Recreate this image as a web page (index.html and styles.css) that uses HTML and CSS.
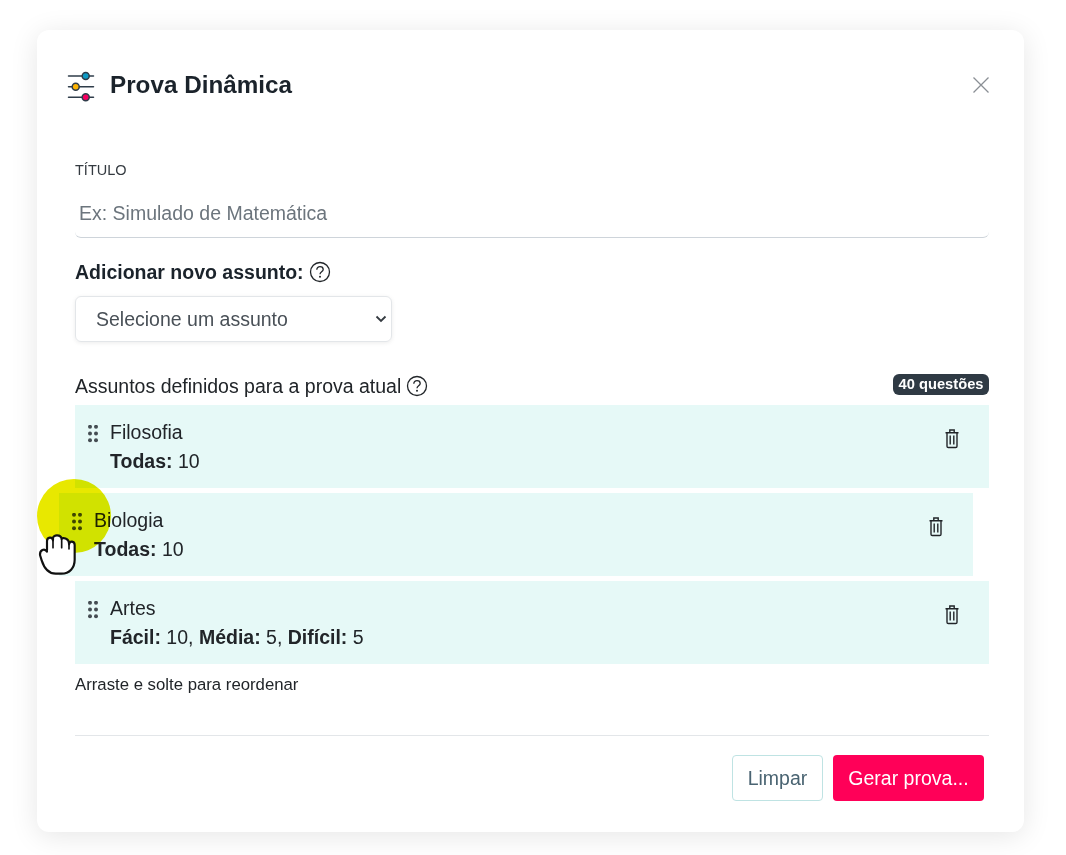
FILE: index.html
```html
<!DOCTYPE html>
<html lang="pt-BR">
<head>
<meta charset="utf-8">
<title>Prova Dinâmica</title>
<link rel="stylesheet" href="styles.css">
</head>
<body>
<main class="modal">
  <header class="modal-header">
    <div class="title-wrap">
      <svg class="title-icon" width="28" height="28" viewBox="0 0 28 28">
        <g stroke="#2f3d4a" stroke-width="1.500" stroke-linecap="round">
          <path d="M1.500 3h25M1.500 13.700h25M1.500 24.300h25"/>
        </g>
        <g stroke="#2f3d4a" stroke-width="1.500">
          <circle cx="18.700" cy="3" r="3.500" fill="#0e9ac4"/>
          <circle cx="8.700" cy="13.700" r="3.500" fill="#fdb302"/>
          <circle cx="18.700" cy="24.300" r="3.500" fill="#f5005f"/>
        </g>
      </svg>
      <h1 class="modal-title">Prova Dinâmica</h1>
    </div>
    <svg class="close-icon" width="18" height="18" viewBox="0 0 18 18">
      <path d="M1.500 1.500l15 15M16.500 1.500l-15 15" stroke="#8a8f94" stroke-width="1.300" fill="none"/>
    </svg>
  </header>

  <section class="form">
    <label class="field-label" for="titulo">TÍTULO</label>
    <input class="title-input" id="titulo" type="text" placeholder="Ex: Simulado de Matemática">

    <div class="add-heading">
      <strong>Adicionar novo assunto:</strong>
      <svg class="help" width="22" height="22" viewBox="0 0 22 22">
        <circle cx="11" cy="11" r="9.500" fill="none" stroke="#212529" stroke-width="1.300"/>
        <path d="M7.800 8.700c0-1.900 1.400-3 3.200-3s3.200 1.100 3.200 2.800c0 2.300-3.200 2.300-3.200 4.700" fill="none" stroke="#212529" stroke-width="1.300"/>
        <circle cx="11" cy="15.800" r="1" fill="#212529"/>
      </svg>
    </div>

    <div class="select-box">
      <span>Selecione um assunto</span>
      <svg width="12" height="8" viewBox="0 0 12 8"><path d="M1.500 1.500L6 6l4.500-4.500" fill="none" stroke="#343a40" stroke-width="1.800"/></svg>
    </div>

    <div class="list-heading">
      <div class="list-heading-text">
        <span>Assuntos definidos para a prova atual</span>
        <svg class="help" width="22" height="22" viewBox="0 0 22 22">
          <circle cx="11" cy="11" r="9.500" fill="none" stroke="#212529" stroke-width="1.300"/>
          <path d="M7.800 8.700c0-1.900 1.400-3 3.200-3s3.200 1.100 3.200 2.800c0 2.300-3.200 2.300-3.200 4.700" fill="none" stroke="#212529" stroke-width="1.300"/>
          <circle cx="11" cy="15.800" r="1" fill="#212529"/>
        </svg>
      </div>
      <span class="badge">40 questões</span>
    </div>

    <ul class="subjects">
      <li class="subject">
        <svg class="grip" width="12" height="20" viewBox="0 0 12 20"><g fill="#454d53"><circle cx="3" cy="1.800" r="2"/><circle cx="9" cy="1.800" r="2"/><circle cx="3" cy="8.500" r="2"/><circle cx="9" cy="8.500" r="2"/><circle cx="3" cy="15.200" r="2"/><circle cx="9" cy="15.200" r="2"/></g></svg>
        <div class="subject-text">
          <div>Filosofia</div>
          <div class="subject-detail"><b>Todas:</b> 10</div>
        </div>
        <svg class="trash" width="16" height="20" viewBox="0 0 16 20"><g fill="none" stroke="#212529" stroke-width="1.400"><path d="M1.500 3.700h13M5.800 3.500V1h4.400v2.500M3 3.700v13.500c0 .8.500 1.300 1.300 1.300h7.400c.8 0 1.300-.5 1.300-1.300V3.700M6.200 6.500v9M9.800 6.500v9"/></g></svg>
      </li>
      <li class="subject dragging">
        <svg class="grip" width="12" height="20" viewBox="0 0 12 20"><g fill="#454d53"><circle cx="3" cy="1.800" r="2"/><circle cx="9" cy="1.800" r="2"/><circle cx="3" cy="8.500" r="2"/><circle cx="9" cy="8.500" r="2"/><circle cx="3" cy="15.200" r="2"/><circle cx="9" cy="15.200" r="2"/></g></svg>
        <div class="subject-text">
          <div>Biologia</div>
          <div class="subject-detail"><b>Todas:</b> 10</div>
        </div>
        <svg class="trash" width="16" height="20" viewBox="0 0 16 20"><g fill="none" stroke="#212529" stroke-width="1.400"><path d="M1.500 3.700h13M5.800 3.500V1h4.400v2.500M3 3.700v13.500c0 .8.500 1.300 1.300 1.300h7.400c.8 0 1.300-.5 1.300-1.300V3.700M6.200 6.500v9M9.800 6.500v9"/></g></svg>
      </li>
      <li class="subject">
        <svg class="grip" width="12" height="20" viewBox="0 0 12 20"><g fill="#454d53"><circle cx="3" cy="1.800" r="2"/><circle cx="9" cy="1.800" r="2"/><circle cx="3" cy="8.500" r="2"/><circle cx="9" cy="8.500" r="2"/><circle cx="3" cy="15.200" r="2"/><circle cx="9" cy="15.200" r="2"/></g></svg>
        <div class="subject-text">
          <div>Artes</div>
          <div class="subject-detail"><b>Fácil:</b> 10, <b>Média:</b> 5, <b>Difícil:</b> 5</div>
        </div>
        <svg class="trash" width="16" height="20" viewBox="0 0 16 20"><g fill="none" stroke="#212529" stroke-width="1.400"><path d="M1.500 3.700h13M5.800 3.500V1h4.400v2.500M3 3.700v13.500c0 .8.500 1.300 1.300 1.300h7.400c.8 0 1.300-.5 1.300-1.300V3.700M6.200 6.500v9M9.800 6.500v9"/></g></svg>
      </li>
    </ul>

    <p class="hint">Arraste e solte para reordenar</p>
  </section>

  <footer class="modal-footer">
    <button class="btn btn-outline" type="button">Limpar</button>
    <button class="btn btn-primary" type="button">Gerar prova...</button>
  </footer>

  <div class="pointer-spot"></div>
  <svg class="hand" width="40" height="44" viewBox="25 185 120 132">
    <path d="M52 240V212C52 200 68 198 70 210V204C70 192 94 192 96 206C98 200 118 204 118 218V222C120 210 135 212 135 224V268C135 292 120 310 95 310H78C58 310 45 298 36 270L31 254C30 240 44 232 52 244" fill="#fff" stroke="#111" stroke-width="6.500" stroke-linejoin="round" stroke-linecap="round"/>
    <path d="M70 210V232M96 206V232M118 222V236" fill="none" stroke="#111" stroke-width="5" stroke-linecap="round"/>
  </svg>
</main>
</body>
</html>
```
FILE: styles.css
```css
* { box-sizing: border-box; }
html, body { margin: 0; padding: 0; background: #fff; }
body {
  padding: 30px 42px 23px 37px;
  font-family: "Liberation Sans", Arial, sans-serif;
  color: #212529;
}
.modal {
  position: relative;
  width: 987px;
  height: 802px;
  background: #fff;
  border-radius: 12px;
  box-shadow: 0 4px 28px rgba(0, 0, 0, .1);
  padding: 38px 35px 0 38px;
}
.modal-header { display: flex; justify-content: space-between; align-items: center; height: 34px; }
.title-wrap { display: flex; align-items: center; gap: 15px; margin-left: -8px; }
.title-icon { display: block; margin-top: 4px; overflow: visible; }
.modal-title { margin: 0; font-size: 24.250px; font-weight: 700; line-height: 34px; color: #1b232b; }
.close-icon { display: block; margin-right: -1px; }

.form { margin-top: 60px; width: 914px; }
.field-label { display: block; font-size: 14.500px; line-height: 16px; color: #343a40; }
.title-input {
  display: block;
  width: 100%;
  height: 49px;
  margin-top: 11px;
  padding: 0 4px;
  border: 0;
  border-bottom: 1px solid #ced4da;
  border-radius: 0 0 6px 6px;
  outline: 0;
  font: 19.500px "Liberation Sans", Arial, sans-serif;
  background: #fff;
}
.title-input::placeholder { color: #6c757d; opacity: 1; }
.add-heading { display: flex; align-items: center; gap: 5px; margin-top: 22px; height: 24px; font-size: 19.500px; color: #1b232b; }
.select-box {
  display: flex;
  align-items: center;
  justify-content: space-between;
  width: 317px;
  height: 46px;
  margin-top: 12px;
  padding: 0 4px 0 20px;
  border: 1px solid #e3e6e9;
  border-radius: 6px;
  box-shadow: 0 1px 4px rgba(0, 0, 0, .08);
  font-size: 19.500px;
  color: #495057;
}
.list-heading { display: flex; align-items: center; justify-content: space-between; margin-top: 30px; height: 28px; }
.list-heading-text { display: flex; align-items: center; gap: 5px; font-size: 19.500px; color: #212529; }
.badge {
  display: block;
  height: 21px;
  margin-bottom: 4px;
  padding: 0 5.500px;
  border-radius: 6px;
  background: #2f3a44;
  color: #fff;
  font-size: 14.700px;
  font-weight: 700;
  line-height: 21px;
}
.subjects { list-style: none; margin: 5px 0 0; padding: 0; display: flex; flex-direction: column; gap: 5px; }
.subject {
  display: flex;
  align-items: flex-start;
  height: 83px;
  padding: 20px 29px 0 12px;
  background: #e6f9f7;
  font-size: 19.500px;
  line-height: 29px;
  color: #212529;
}
.dragging { transform: translateX(-16px); }
.grip { flex: none; }
.subject-text { flex: 1; margin-left: 11px; margin-top: -7px; }
.trash { flex: none; margin-top: 4px; }
.hint { margin: 12px 0 0; font-size: 16.750px; line-height: 18px; color: #212529; }

.modal-footer {
  display: flex;
  justify-content: flex-end;
  gap: 10px;
  width: 914px;
  margin-top: 41px;
  padding: 19px 5px 0 0;
  border-top: 1px solid #e3e6e9;
}
.btn {
  height: 46px;
  border-radius: 4px;
  font: 19.500px "Liberation Sans", Arial, sans-serif;
  cursor: pointer;
}
.btn-outline { width: 91px; padding: 0; background: #fff; border: 1px solid #bfe3e3; color: #4a6472; }
.btn-primary { width: 151px; padding: 0; background: #ff0058; border: 0; color: #fff; }

.pointer-spot {
  position: absolute;
  left: 0;
  top: 449px;
  width: 74px;
  height: 74px;
  border-radius: 50%;
  background: #e8e800;
  mix-blend-mode: multiply;
}
.hand { position: absolute; left: 1px; top: 502px; }
```
